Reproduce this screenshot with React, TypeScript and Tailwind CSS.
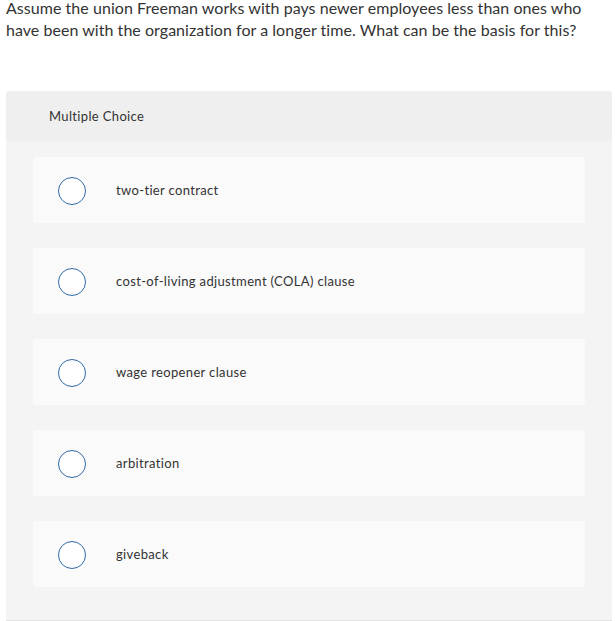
export default function App() {
  const options = [
    "two-tier contract",
    "cost-of-living adjustment (COLA) clause",
    "wage reopener clause",
    "arbitration",
    "giveback",
  ];
  return (
    <div className="w-[615px] h-[621px] bg-white overflow-hidden font-['Lato',sans-serif] text-[#333]">
      {/* Question */}
      <p className="-mt-[3px] pl-[6px] pr-2 text-[16px] leading-[22px] tracking-[0.04px]">
        Assume the union Freeman works with pays newer employees less than ones who have been with the
        organization for a longer time. What can be the basis for this?
      </p>

      {/* Answer panel */}
      <section className="mt-[50px] ml-[6px] w-[606px] h-[530px] bg-[#f4f4f4] rounded-t-[3px] border-b border-[#e2e2e2]">
        <div className="h-[50px] bg-[#efefef] rounded-t-[3px] flex items-center pl-[43px] pt-[2px] text-[13px] tracking-[0.35px]">
          Multiple Choice
        </div>
        <div className="flex flex-col gap-[25px] pt-[16px] px-[27px]">
          {options.map((opt) => (
            <div key={opt} className="h-[66px] bg-[#fafafa] rounded-[3px] flex items-center pt-[1px]">
              <span className="ml-[25px] w-[28px] h-[28px] rounded-full border-[1.5px] border-[#2d6aa6] bg-white shrink-0" />
              <span className="ml-[30px] text-[13px] tracking-[0.35px]">{opt}</span>
            </div>
          ))}
        </div>
      </section>
    </div>
  );
}
